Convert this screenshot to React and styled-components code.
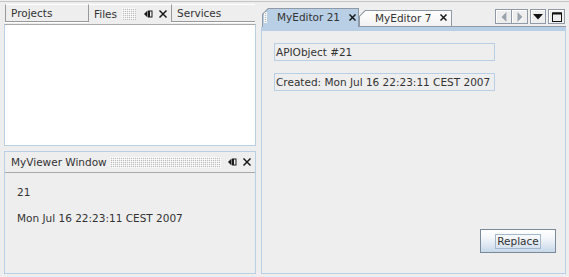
import React from 'react';
import styled, { createGlobalStyle } from 'styled-components';

const GlobalStyle = createGlobalStyle`
  html, body { margin: 0; padding: 0; background: #eeeeee; }
  body { font-family: "DejaVu Sans", "Liberation Sans", sans-serif; }
`;

const bumps = `
  background-color: #eeeeee;
  background-image: conic-gradient(at 1px 1px, #eeeeee 0 90deg, #c0c0c0 0 180deg, #eeeeee 0 270deg, #ffffff 0);
  background-size: 2px 2px;
`;

const Root = styled.div`
  width: 569px;
  height: 277px;
  box-sizing: border-box;
  background: #eeeeee;
  color: #333333;
  font: 10.5px "DejaVu Sans", "Liberation Sans", sans-serif;
  padding-top: 1px;
  display: flex;
  flex-direction: column;
  overflow: hidden;
`;

const TopRule = styled.div`
  height: 1px;
  flex: none;
  background: #c6c6c6;
`;

const Workspace = styled.div`
  flex: 1;
  min-height: 0;
  display: flex;
  gap: 5px;
  padding: 2px 3px 3px 4px;
`;

const LeftColumn = styled.div`
  width: 252px;
  flex: none;
  display: flex;
  flex-direction: column;
  gap: 5px;
`;

/* ---------- explorer (Projects / Files / Services) ---------- */

const ExplorerPanel = styled.div`
  height: 142px;
  flex: none;
  display: flex;
  flex-direction: column;
`;

const ExplorerTabs = styled.div`
  height: 20px;
  flex: none;
  display: flex;
  align-items: flex-start;
  padding-left: 1px;
`;

const ExplorerTab = styled.div`
  width: ${(p) => p.$w}px;
  height: 18px;
  flex: none;
  box-sizing: border-box;
  border-top: 1px solid #ffffff;
  border-left: 1px solid #9a9a9a;
  border-bottom: ${(p) => (p.$selected ? '0' : '1px solid #9a9a9a')};
  box-shadow: ${(p) => (p.$selected ? 'none' : '0 1px 0 #ffffff')};
  display: flex;
  align-items: center;
  padding: 0 4px 0 5px;
  line-height: 16px;
  white-space: nowrap;
`;

const Grip = styled.div`
  ${bumps}
  flex: ${(p) => (p.$fixed ? 'none' : '1')};
  width: ${(p) => (p.$fixed ? `${p.$fixed}px` : 'auto')};
  height: ${(p) => p.$h}px;
  margin-left: ${(p) => p.$ml || 0}px;
`;

const IconSlot = styled.span`
  display: inline-flex;
  flex: none;
  margin-left: ${(p) => p.$ml || 0}px;
  margin-right: ${(p) => p.$mr || 0}px;
  margin-top: ${(p) => p.$mt || 0}px;
`;

const ExplorerBody = styled.div`
  flex: 1;
  background: #ffffff;
  border: 1px solid #b8cfe5;
  border-top: 1px solid #a9a9a9;
`;

/* ---------- viewer window ---------- */

const ViewerPanel = styled.div`
  flex: 1;
  border: 1px solid #b8cfe5;
  display: flex;
  flex-direction: column;
`;

const ViewerHeader = styled.div`
  height: 20px;
  flex: none;
  display: flex;
  align-items: center;
  padding: 0 4px 0 6px;
  border-bottom: 1px solid #a9a9a9;
  line-height: 20px;
  white-space: nowrap;
`;

const ViewerBody = styled.div`
  flex: 1;
  display: flex;
  flex-direction: column;
  gap: 12px;
  padding: 12px 12px;
  line-height: 14px;
`;

/* ---------- editor ---------- */

const EditorColumn = styled.div`
  width: 305px;
  flex: none;
  display: flex;
  flex-direction: column;
`;

const EditorTabRow = styled.div`
  height: 23px;
  flex: none;
  display: flex;
  align-items: flex-end;
  padding-left: 1px;
`;

const EditorTabFrame = styled.div`
  width: ${(p) => p.$w}px;
  height: ${(p) => (p.$selected ? 19 : 17)}px;
  flex: none;
  box-sizing: border-box;
  background: #8f9aa6;
  padding: 1px 1px ${(p) => (p.$selected ? 0 : 1)}px 1px;
  clip-path: polygon(0 6px, 6px 0, 100% 0, 100% 100%, 0 100%);
`;

const EditorTabFace = styled.div`
  height: 100%;
  box-sizing: border-box;
  background: ${(p) => (p.$selected ? '#b8cfe5' : 'linear-gradient(#ffffff, #f2f2f2)')};
  clip-path: polygon(0 5.6px, 5.6px 0, 100% 0, 100% 100%, 0 100%);
  display: flex;
  align-items: center;
  padding: 0 ${(p) => p.$pr}px ${(p) => p.$pb}px ${(p) => p.$pl}px;
  white-space: nowrap;
  line-height: 14px;
`;

const TabTitle = styled.span`
  flex: 1;
  margin-left: ${(p) => p.$ml || 0}px;
`;

const TabStrip = styled.div`
  flex: 1;
  height: 23px;
  box-sizing: border-box;
  border-bottom: 1px solid #8f9aa6;
  display: flex;
  justify-content: flex-end;
  align-items: flex-start;
  padding: 5px 1px 0 0;
  gap: 2px;
`;

const NavGroup = styled.div`
  display: flex;
  height: 15px;
  box-sizing: border-box;
  border: 1px solid #8f9aa6;
`;

const NavButton = styled.div`
  width: 15px;
  height: 13px;
  display: flex;
  align-items: center;
  justify-content: center;
  box-shadow: inset 1px 1px 0 #ffffff;
  & + & {
    border-left: 1px solid #8f9aa6;
  }
`;

const ToolButton = styled.div`
  width: ${(p) => p.$w}px;
  height: 15px;
  box-sizing: border-box;
  border: 1px solid #8f9aa6;
  box-shadow: inset 1px 1px 0 #ffffff;
  display: flex;
  align-items: center;
  justify-content: center;
`;

const SelectedBand = styled.div`
  height: 4px;
  flex: none;
  background: #b8cfe5;
`;

const EditorBody = styled.div`
  flex: 1;
  border: 1px solid #b8cfe5;
  border-top: 0;
  display: flex;
  flex-direction: column;
  align-items: flex-start;
  gap: 12px;
  padding: 12px 9px 20px 12px;
`;

const Field = styled.div`
  width: 221px;
  height: 18px;
  box-sizing: border-box;
  border: 1px solid #b8cfe5;
  padding-left: 1px;
  line-height: 16px;
  white-space: nowrap;
`;

const ReplaceButton = styled.button`
  margin-top: auto;
  align-self: flex-end;
  width: 76px;
  height: 24px;
  box-sizing: border-box;
  border: 1px solid #7a8a99;
  border-radius: 0;
  background: linear-gradient(#ffffff 0%, #f4f7fb 35%, #c8d8e9 100%);
  display: flex;
  align-items: center;
  justify-content: center;
  padding: 0;
  font: 10.5px "DejaVu Sans", "Liberation Sans", sans-serif;
  color: #333333;
`;

const FocusRing = styled.span`
  border: 1px solid #a3b8cc;
  padding: 0 1px;
  line-height: 13px;
`;

/* ---------- icons ---------- */

const PinIcon = () => (
  <svg width="10" height="8" viewBox="0 0 10 8">
    <polygon points="3.5,0.5 0,4 3.5,7.5" fill="#1a1a1a" />
    <rect x="4.5" y="1" width="3.5" height="6" fill="none" stroke="#1a1a1a" strokeWidth="1" />
    <rect x="4.5" y="1" width="1.5" height="6" fill="#1a1a1a" />
  </svg>
);

const CloseIcon = ({ size = 8, w = 1.5 }) => (
  <svg width={size} height={size} viewBox={`0 0 ${size} ${size}`}>
    <path
      d={`M1 1 L${size - 1} ${size - 1} M${size - 1} 1 L1 ${size - 1}`}
      stroke="#1a1a1a"
      strokeWidth={w}
      strokeLinecap="square"
    />
  </svg>
);

const ArrowIcon = ({ dir }) => (
  <svg width="6" height="10" viewBox="0 0 6 10">
    {dir === 'left' ? (
      <>
        <polygon points="5.5,0 0.5,5 5.5,10" fill="#ffffff" transform="translate(0.6,0.6)" />
        <polygon points="5.5,0 0.5,5 5.5,10" fill="#9aa3ac" />
      </>
    ) : (
      <>
        <polygon points="0.5,0 5.5,5 0.5,10" fill="#ffffff" transform="translate(0.6,0.6)" />
        <polygon points="0.5,0 5.5,5 0.5,10" fill="#9aa3ac" />
      </>
    )}
  </svg>
);

const DropIcon = () => (
  <svg width="10" height="6" viewBox="0 0 10 6">
    <polygon points="0,0 10,0 5,5.5" fill="#111111" />
  </svg>
);

const MaxIcon = () => (
  <svg width="10" height="10" viewBox="0 0 10 10">
    <rect x="0.5" y="1" width="9" height="8.5" fill="none" stroke="#111111" strokeWidth="1" />
    <rect x="0.5" y="0.5" width="9" height="2" fill="#111111" />
  </svg>
);

export default function App() {
  return (
    <>
      <GlobalStyle />
      <Root>
        <TopRule />
        <Workspace>
          <LeftColumn>
            <ExplorerPanel>
              <ExplorerTabs>
                <ExplorerTab $w={83}>Projects</ExplorerTab>
                <ExplorerTab $w={83} $selected>
                  <span>Files</span>
                  <Grip $h={12} $ml={5} />
                  <IconSlot $ml={8}>
                    <PinIcon />
                  </IconSlot>
                  <IconSlot $ml={5}>
                    <CloseIcon />
                  </IconSlot>
                </ExplorerTab>
                <ExplorerTab $w={84}>Services</ExplorerTab>
              </ExplorerTabs>
              <ExplorerBody />
            </ExplorerPanel>

            <ViewerPanel>
              <ViewerHeader>
                <span>MyViewer Window</span>
                <Grip $h={11} $ml={3} />
                <IconSlot $ml={7}>
                  <PinIcon />
                </IconSlot>
                <IconSlot $ml={5}>
                  <CloseIcon />
                </IconSlot>
              </ViewerHeader>
              <ViewerBody>
                <div>21</div>
                <div>Mon Jul 16 22:23:11 CEST 2007</div>
              </ViewerBody>
            </ViewerPanel>
          </LeftColumn>

          <EditorColumn>
            <EditorTabRow>
              <EditorTabFrame $w={97} $selected>
                <EditorTabFace $selected $pl={1} $pr={2} $pb={2}>
                  <Grip $fixed={3} $h={11} />
                  <TabTitle $ml={10}>MyEditor 21</TabTitle>
                  <IconSlot>
                    <CloseIcon size={7} w={1.5} />
                  </IconSlot>
                </EditorTabFace>
              </EditorTabFrame>
              <EditorTabFrame $w={93}>
                <EditorTabFace $pl={15} $pr={4} $pb={2}>
                  <TabTitle>MyEditor 7</TabTitle>
                  <IconSlot>
                    <CloseIcon size={7} w={1.5} />
                  </IconSlot>
                </EditorTabFace>
              </EditorTabFrame>
              <TabStrip>
                <NavGroup>
                  <NavButton>
                    <ArrowIcon dir="left" />
                  </NavButton>
                  <NavButton>
                    <ArrowIcon dir="right" />
                  </NavButton>
                </NavGroup>
                <ToolButton $w={16}>
                  <DropIcon />
                </ToolButton>
                <ToolButton $w={17}>
                  <MaxIcon />
                </ToolButton>
              </TabStrip>
            </EditorTabRow>
            <SelectedBand />
            <EditorBody>
              <Field>APIObject #21</Field>
              <Field>Created: Mon Jul 16 22:23:11 CEST 2007</Field>
              <ReplaceButton>
                <FocusRing>Replace</FocusRing>
              </ReplaceButton>
            </EditorBody>
          </EditorColumn>
        </Workspace>
      </Root>
    </>
  );
}
